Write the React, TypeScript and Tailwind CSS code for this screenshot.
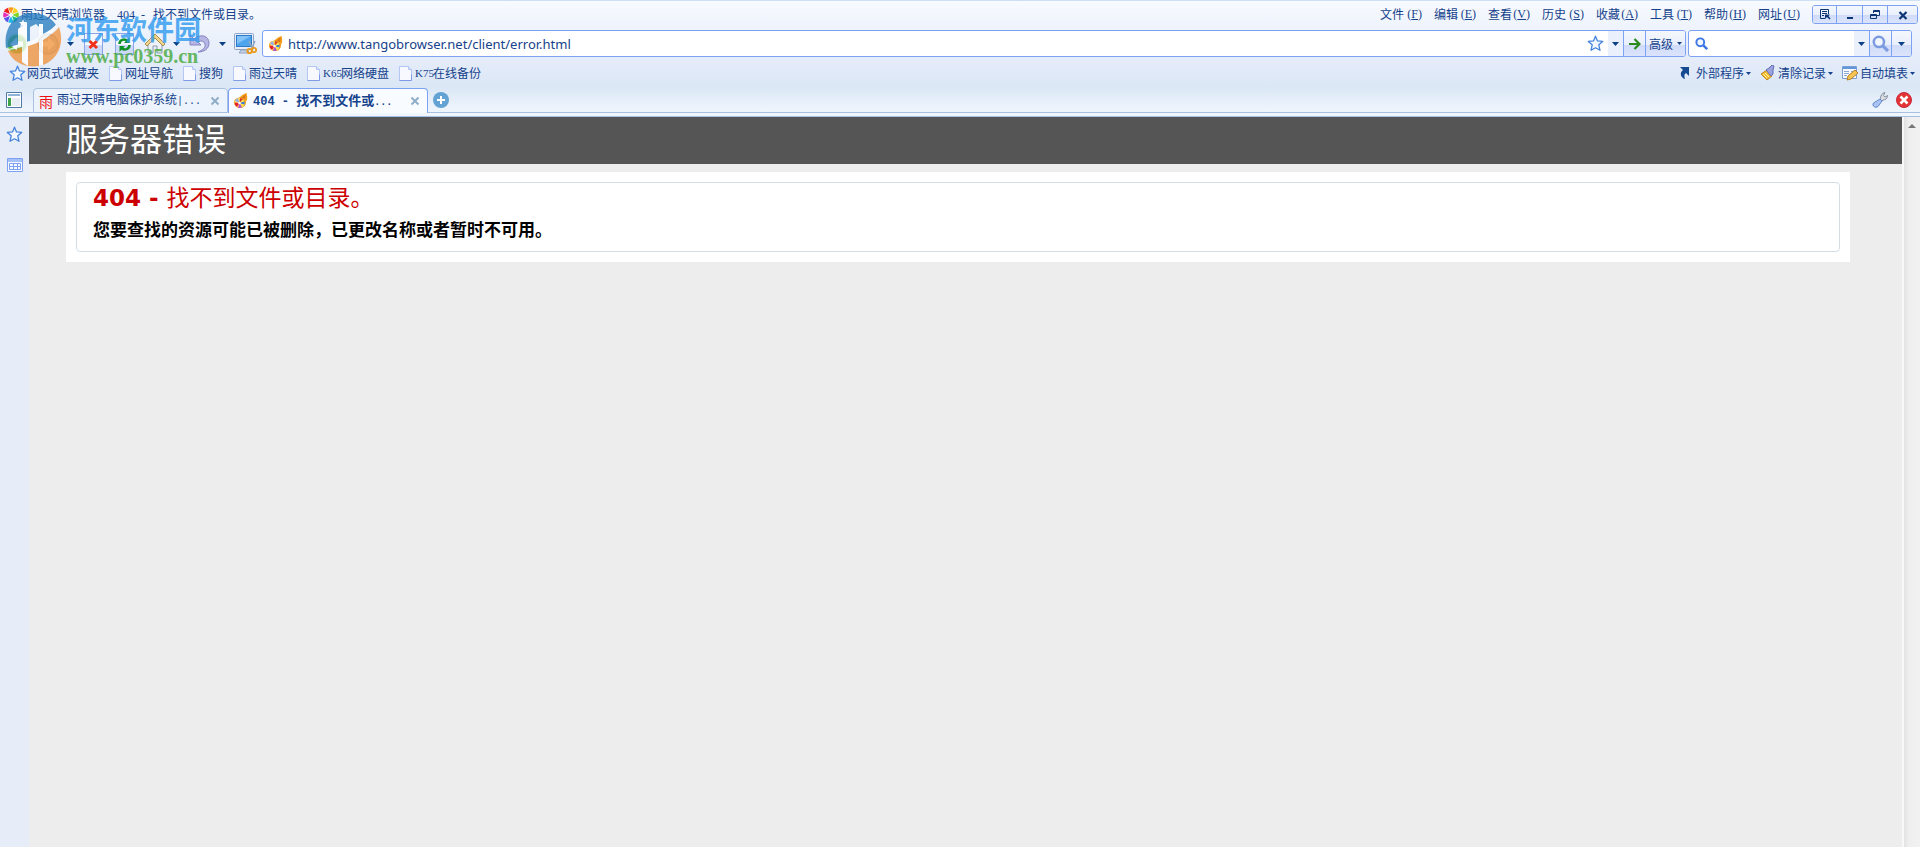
import type { ReactNode } from "react";

const glossy =
  "bg-[linear-gradient(to_bottom,#f4f7fd_0%,#e9effb_55%,#d0dbf8_55%,#dbe4fb_100%)]";

function Ascii({ children }: { children: ReactNode }) {
  return <span className="whitespace-pre font-['Liberation_Serif',serif] text-[12px]">{children}</span>;
}

function Caret({ small = false }: { small?: boolean }) {
  return small ? (
    <svg width="5" height="3" viewBox="0 0 5 3" className="shrink-0" aria-hidden="true">
      <path d="M0 0h5L2.5 3z" fill="#15428b" />
    </svg>
  ) : (
    <svg width="7" height="4" viewBox="0 0 7 4" className="shrink-0" aria-hidden="true">
      <path d="M0 0h7L3.5 4z" fill="#0b3f86" />
    </svg>
  );
}

function AppLogo() {
  const colors = ["#ff9a1f", "#ffd21f", "#7fd321", "#19c37d", "#1fb5e8", "#5a55e8", "#e92fb8", "#f01f1f"];
  return (
    <svg width="16" height="16" viewBox="-8 -8 16 16" className="shrink-0" aria-hidden="true">
      {colors.map((c, i) => (
        <path key={c} d="M0-1.5L-2.8-7.3A7.8 7.8 0 0 1 2.8-7.3z" fill={c} transform={`rotate(${i * 45})`} />
      ))}
    </svg>
  );
}

function FlameIcon() {
  return (
    <svg width="16" height="16" viewBox="0 0 16 16" className="shrink-0" aria-hidden="true">
      <path d="M5 5C8 4 9 1 14 0c-1 2 1 3 0 5 1 1-1 3-1 4 0 4-3 6-6 6-4 0-6-3-6-6 0-2 2-4 4-4z" fill="#f6a01c" />
      <path d="M8 5c2-1 3-3 5-4-1 2 0 3-1 5z" fill="#d9781a" />
      <circle cx="6.5" cy="10" r="5" fill="#ffe54a" />
      <path d="M6.500 10L2 8a5 5 0 0 1 3-3z" fill="#9bb0e8" />
      <path d="M6.500 10L1.500 9.500A5 5 0 0 0 4 14z" fill="#e41f3a" />
      <path d="M6.500 10L5 14.800a5 5 0 0 0 4-.600z" fill="#b14fd6" />
      <path d="M6.500 10l4.800 1.500a5 5 0 0 0 .200-3z" fill="#2f7be0" />
      <path d="M6.500 10L7 5l3 1z" fill="#d8372a" />
      <circle cx="6.500" cy="10" r="1.300" fill="#fff" />
    </svg>
  );
}

function StarIcon() {
  return (
    <svg width="17" height="17" viewBox="0 0 17 17" className="shrink-0" aria-hidden="true">
      <path
        d="M8.500 1.200l2 4.700 5.200.500-3.900 3.400 1.200 5.500-4.500-2.500L4 15.300l1.200-5.500L1.300 6.400l5.200-.500z"
        fill="#f3f8ff" stroke="#4583dd" strokeWidth="1.300" strokeLinejoin="round"
      />
    </svg>
  );
}

function PageIcon() {
  return (
    <svg width="13" height="15" viewBox="0 0 13 15" className="shrink-0" aria-hidden="true">
      <path d="M.5.5h9l3 3v11H.5z" fill="#f7f9ff" stroke="#b3c5f2" />
      <path d="M.5 14.500h12v-6" fill="none" stroke="#7f9be8" />
      <path d="M9.500.5v3h3" fill="#dbe5fb" stroke="#b3c5f2" />
    </svg>
  );
}

function CloseX() {
  return (
    <svg width="10" height="10" viewBox="0 0 10 10" aria-hidden="true">
      <path d="M1.500 1.500l7 7M8.500 1.500l-7 7" stroke="#8fadc6" strokeWidth="2" />
    </svg>
  );
}

function SheetFrame({ children }: { children: ReactNode }) {
  return (
    <svg width="19" height="22" viewBox="0 0 19 22" aria-hidden="true">
      <rect x=".5" y=".5" width="18" height="21" fill="#f4f7ff" stroke="#8ba6e6" />
      <path d="M1 12h17v9H1z" fill="#ccd9fa" />
      {children}
    </svg>
  );
}

const menus = [
  ["文件", "F"], ["编辑", "E"], ["查看", "V"], ["历史", "S"],
  ["收藏", "A"], ["工具", "T"], ["帮助", "H"], ["网址", "U"],
];

function TitleBar() {
  return (
    <header className="flex h-[28px] items-start">
      <h1 className="flex flex-1 items-center gap-[2px] pl-[3px] pt-1 leading-[18px]">
        <AppLogo />
        <span className="flex whitespace-nowrap">
          雨过天晴浏览器
          <span className="ml-3 w-[36px]"><Ascii>{"404  - "}</Ascii></span>
          找不到文件或目录。
        </span>
      </h1>
      <nav className="mr-3 flex gap-3 pt-1 leading-[18px]">
        {menus.map(([label, key]) => (
          <button key={key} type="button" className="flex w-[42px] justify-between whitespace-nowrap">
            <span>{label}</span>
            <Ascii>(<span className="underline underline-offset-1">{key}</span>)</Ascii>
          </button>
        ))}
      </nav>
      <div className="mr-[2px] mt-1 flex h-[19px] divide-x divide-[#7ea2f3] overflow-hidden rounded-[3px] border border-[#7ea2f3]">
        <button type="button" aria-label="工具栏" className={`grid w-[24px] place-items-center ${glossy}`}>
          <svg width="12" height="12" viewBox="0 0 12 12" fill="none" stroke="#0c3576" aria-hidden="true">
            <path d="M9.500 5V.5h-8v9H6M3 2.500h5M3 4.500h5M3 6.500h2" />
            <path d="M6 5.500h5l-1.500 1.500 2 2.500-1 1-2.500-2.500L6 10z" fill="#0c3576" stroke="none" />
          </svg>
        </button>
        <button type="button" aria-label="最小化" className={`grid w-[26px] place-items-center ${glossy}`}>
          <svg width="8" height="10" viewBox="0 0 8 10" aria-hidden="true"><path d="M1 7h6v2H1z" fill="#0c3576" /></svg>
        </button>
        <button type="button" aria-label="还原" className={`grid w-[25px] place-items-center ${glossy}`}>
          <svg width="10" height="10" viewBox="0 0 10 10" fill="none" stroke="#0c3576" aria-hidden="true">
            <path d="M3.500 3V.5h6v5H7M3 1.500h7M.5 4.500h6v4h-6zM0 5.500h7" />
          </svg>
        </button>
        <button type="button" aria-label="关闭" className={`grid w-[29px] place-items-center ${glossy}`}>
          <svg width="10" height="10" viewBox="0 0 10 10" aria-hidden="true">
            <path d="M1.500 2l7 7M8.500 2l-7 7" stroke="#0c3576" strokeWidth="2.200" />
          </svg>
        </button>
      </div>
    </header>
  );
}

function NavButtons() {
  return (
    <div className="flex w-[262px] shrink-0 items-center pl-[6px]">
      <button type="button" aria-label="后退">
        <svg width="22" height="22" viewBox="0 0 22 22" aria-hidden="true">
          <circle cx="11" cy="11" r="10" fill="#5fb83c" stroke="#c6e6bb" strokeWidth="1.500" />
          <path d="M11 4l-7 7 7 7v-4.500h6v-5h-6z" fill="#fff" />
        </svg>
      </button>
      <button type="button" aria-label="前进" className="ml-[9px]">
        <svg width="22" height="22" viewBox="0 0 22 22" aria-hidden="true">
          <circle cx="11" cy="11" r="10" fill="#d0d3d8" stroke="#b6bac2" strokeWidth="1.500" />
          <path d="M11 4l7 7-7 7v-4.500H5v-5h6z" fill="#fff" />
        </svg>
      </button>
      <button type="button" aria-label="浏览记录" className="ml-2"><Caret /></button>
      <button type="button" aria-label="停止" className="ml-[10px]">
        <SheetFrame><path d="M5.500 8l7.500 7M13 8l-7.500 7" stroke="#f03018" strokeWidth="3" /></SheetFrame>
      </button>
      <button type="button" aria-label="刷新" className="ml-3">
        <SheetFrame>
          <path d="M4.500 11c0-4 5-6 8-3M14.500 12c0 4-5 6-8 3" fill="none" stroke="#109326" strokeWidth="2.600" />
          <path d="M14.500 4v6H9zM4.500 19v-6H10z" fill="#109326" />
        </SheetFrame>
      </button>
      <button type="button" aria-label="主页" className="ml-[10px]">
        <svg width="22" height="22" viewBox="0 0 22 22" aria-hidden="true">
          <path d="M4 10v10h5v-7h4v7h5V10l-7-7z" fill="#eef1f7" stroke="#8d99ae" />
          <path d="M1 11L11 1l10 10-2 2-8-8-8 8z" fill="#f0d489" stroke="#a98f4d" />
        </svg>
      </button>
      <button type="button" aria-label="主页选项" className="ml-[7px]"><Caret /></button>
      <button type="button" aria-label="撤销" className="ml-[9px]">
        <svg width="22" height="22" viewBox="0 0 22 22" aria-hidden="true">
          <path d="M5 6c7-6 15-3 15 4 0 6-5 9-11 9 5-2 8-5 7-8-1-3-4-4-7-2l3 3H1V2z" fill="#b7b5e4" stroke="#8583bf" strokeLinejoin="round" />
        </svg>
      </button>
      <button type="button" aria-label="撤销选项" className="ml-2"><Caret /></button>
      <button type="button" aria-label="截图" className="ml-2">
        <svg width="23" height="22" viewBox="0 0 23 22" aria-hidden="true">
          <rect x=".5" y=".5" width="19" height="16" rx="1" fill="#e7edf7" stroke="#8ea5c9" />
          <rect x="2.500" y="2.500" width="15" height="11" fill="#4fa4ee" stroke="#2d78c7" />
          <path d="M3 3h14L3 11z" fill="#84c3f8" />
          <path d="M7 17h7l1 3H5z" fill="#c5d0e2" stroke="#92a4c2" />
          <path d="M15 8l3.500 8M21 8l-3.500 8" stroke="#93a5bd" strokeWidth="1.500" />
          <circle cx="15.500" cy="18" r="2.200" fill="none" stroke="#ec9a1a" strokeWidth="1.800" />
          <circle cx="20" cy="17" r="2.200" fill="none" stroke="#ec9a1a" strokeWidth="1.800" />
        </svg>
      </button>
    </div>
  );
}

function Magnifier({ size, color }: { size: number; color: string }) {
  return (
    <svg width={size} height={size} viewBox="0 0 16 16" className="shrink-0" aria-hidden="true">
      <circle cx="6.500" cy="6.500" r="4.800" fill="#f1f6ff" stroke={color} strokeWidth="2.400" />
      <path d="M10 10l5 5" stroke={color} strokeWidth="3" />
    </svg>
  );
}

function AddressRow() {
  return (
    <div className="mt-[1px] flex h-[27px] items-stretch pr-2">
      <NavButtons />
      <div className="flex min-w-0 flex-1 overflow-hidden rounded-[3px] border border-[#7ea2f3] bg-white">
        <div className="flex min-w-0 flex-1 items-center pl-[5px] pr-1">
          <FlameIcon />
          <input
            type="text"
            aria-label="地址"
            defaultValue="http://www.tangobrowser.net/client/error.html"
            className="ml-1 min-w-0 flex-1 bg-transparent font-['Noto_Sans',sans-serif] text-[13px] text-[#15428b] outline-none"
          />
          <button type="button" aria-label="收藏"><StarIcon /></button>
        </div>
        <button type="button" aria-label="地址列表" className="grid w-[15px] place-items-center bg-[#eaf1fc]"><Caret /></button>
        <button type="button" aria-label="转到" className={`grid w-[22px] place-items-center border-l border-[#7ea2f3] ${glossy}`}>
          <svg width="12" height="12" viewBox="0 0 12 12" fill="none" stroke="#2b8a1e" strokeWidth="2.200" aria-hidden="true">
            <path d="M0 6h10M5.500 1l5 5-5 5" />
          </svg>
        </button>
        <button type="button" className={`flex w-[40px] items-center gap-1 border-l border-[#7ea2f3] pl-[3px] ${glossy}`}>
          高级<Caret small />
        </button>
      </div>
      <div className="ml-[2px] flex w-[224px] overflow-hidden rounded-[3px] border border-[#7ea2f3] bg-white">
        <label className="flex min-w-0 flex-1 items-center pl-[6px]">
          <Magnifier size={13} color="#3f78e4" />
          <input type="text" aria-label="搜索" className="min-w-0 flex-1 bg-transparent pl-1 outline-none" />
        </label>
        <button type="button" aria-label="搜索引擎" className="grid w-[15px] place-items-center bg-[#eaf1fc]"><Caret /></button>
        <button type="button" aria-label="开始搜索" className={`grid w-[22px] place-items-center border-l border-[#7ea2f3] ${glossy}`}>
          <Magnifier size={17} color="#7d9be0" />
        </button>
        <button type="button" aria-label="搜索选项" className={`grid w-[20px] place-items-center border-l border-[#7ea2f3] ${glossy}`}><Caret /></button>
      </div>
    </div>
  );
}

function BookmarksBar() {
  const links = [
    { code: "", label: "网址导航" },
    { code: "", label: "搜狗" },
    { code: "", label: "雨过天晴" },
    { code: "K65", label: "网络硬盘" },
    { code: "K75", label: "在线备份" },
  ];
  return (
    <div className="mt-[2px] flex h-[28px] items-center whitespace-nowrap pl-[9px] pr-[5px]">
      <div className="flex flex-1 items-center gap-[10px]">
        <a href="#favorites" className="flex items-center gap-[1px]"><StarIcon />网页式收藏夹</a>
        {links.map(({ code, label }) => (
          <a key={label} href="#bookmark" className="flex items-center gap-[3px]">
            <PageIcon />
            <span className="flex">
              {code && <span className="w-[18px] font-['Liberation_Serif',serif] text-[11px]">{code}</span>}
              {label}
            </span>
          </a>
        ))}
      </div>
      <div className="flex items-center gap-[9px]">
        <button type="button" className="flex items-center gap-[2px]">
          <svg width="16" height="16" viewBox="0 0 16 16" aria-hidden="true">
            <path d="M2 2h9v9l-3-3c-2 1-2 3-1 6-4-1-6-6-2-9z" fill="#154a90" />
          </svg>
          外部程序<Caret small />
        </button>
        <button type="button" className="flex items-center gap-[2px]">
          <svg width="16" height="16" viewBox="0 0 16 16" aria-hidden="true">
            <path d="M1 9l6-4 5 6-5 4z" fill="#f5bd2c" stroke="#bf8520" />
            <path d="M3 9l4 4M5 8l4 4" stroke="#fff0a8" />
            <path d="M6 5l3-2 3-3 2 1-1 4v4l-2 2z" fill="#9ba2dd" stroke="#656db5" />
          </svg>
          清除记录<Caret small />
        </button>
        <button type="button" className="flex items-center gap-[2px]">
          <svg width="16" height="16" viewBox="0 0 16 16" aria-hidden="true">
            <path d="M.5 1.500h14v12H.5z" fill="#f8faff" stroke="#7b9fd4" />
            <path d="M1 2h13v2H1z" fill="#6297dc" />
            <path d="M2 6.500h5M2 8.500h5M2 10.500h3M9 6.500h4" stroke="#8aa9d8" />
            <path d="M5 15l1-4 7-6 3 3-7 6z" fill="#f6c552" stroke="#b67f28" />
          </svg>
          自动填表<Caret small />
        </button>
      </div>
    </div>
  );
}

function TabBar() {
  return (
    <div className="mt-[1px] flex h-[25px]">
      <div className="flex w-[33px] items-center border-b border-[#a9c0e0] pl-[6px]">
        <button type="button" aria-label="侧边栏">
          <svg width="16" height="16" viewBox="0 0 16 16" aria-hidden="true">
            <path d="M.5.5h15v15H.5z" fill="#fff" stroke="#4d7aa8" />
            <path d="M2 2h12v2H2z" fill="#8fb4da" />
            <path d="M2 6h3v8H2z" fill="#3fa34a" />
            <path d="M6 6h8v8H6z" fill="#e8edf4" />
          </svg>
        </button>
      </div>
      <div className="flex w-[195px] items-center rounded-t-[4px] border-x border-b border-t border-[#a9c0e0] bg-[#edf3fc] pl-[5px] pr-[7px]">
        <span className="w-[14px] text-[14px] text-[#ee1010]">雨</span>
        <button type="button" className="ml-1 flex-1 whitespace-nowrap text-left">
          雨过天晴电脑保护系统
          <span className="font-['Liberation_Mono',monospace] text-[10px]">|...</span>
        </button>
        <button type="button" aria-label="关闭标签"><CloseX /></button>
      </div>
      <div className="flex w-[200px] items-center rounded-t-[4px] border-x border-t border-[#7ea2f3] bg-[#f8fbff] pl-[4px] pr-[7px]">
        <FlameIcon />
        <button type="button" className="ml-1 flex-1 whitespace-nowrap text-left text-[13px] font-bold">
          <span className="whitespace-pre font-['Liberation_Mono',monospace] text-[12px]">{"404 - "}</span>找不到文件或
          <span className="font-['Liberation_Mono',monospace] text-[10px]">...</span>
        </button>
        <button type="button" aria-label="关闭标签"><CloseX /></button>
      </div>
      <div className="flex flex-1 items-center border-b border-[#a9c0e0] pl-[5px] pr-2">
        <button type="button" aria-label="新标签">
          <svg width="16" height="16" viewBox="0 0 16 16" aria-hidden="true">
            <circle cx="8" cy="8" r="8" fill="#62a3d4" />
            <path d="M8 4v8M4 8h8" stroke="#fff" strokeWidth="2" />
          </svg>
        </button>
        <button type="button" aria-label="设置" className="ml-auto">
          <svg width="16" height="16" viewBox="0 0 16 16" aria-hidden="true">
            <path d="M8.500 6.500C8.500 3.500 10 1 13 .5l-1.500 3 1.500 1.500 2.500-1.500c0 3-2 4.500-4.500 4.500l-1 1-2-2z" fill="#d9dde3" stroke="#858f9d" />
            <path d="M8 7l2 2-4 5.500C3.500 16.500-.5 14 1.500 11z" fill="#a9c4f2" stroke="#6286c7" />
          </svg>
        </button>
        <button type="button" aria-label="关闭所有标签" className="ml-2">
          <svg width="16" height="16" viewBox="0 0 16 16" aria-hidden="true">
            <circle cx="8" cy="8" r="7.500" fill="#e23434" stroke="#c92a3c" />
            <path d="M4.500 4.500l7 7M11.500 4.500l-7 7" stroke="#fff" strokeWidth="2.600" />
          </svg>
        </button>
      </div>
    </div>
  );
}

function Watermark() {
  return (
    <div className="pointer-events-none absolute left-[4px] top-[12px] flex gap-[4px]">
      <svg width="58" height="55" viewBox="0 0 58 55" className="opacity-75" aria-hidden="true">
        <path d="M2 36C-1 14 12 1 29 1c10 0 19 5 23 12-4 6-10 10-16 12v-9l-4-4-6 3v14L2 36z" fill="#1f78bd" />
        <path d="M4 39c5-1 10-2 15-4v15l5 3V34c4-1 8-3 11-4v24C22 56 9 51 4 39zM39 28c7-4 13-9 16-13 6 17-1 32-16 38z" fill="#ef8f35" />
        <path d="M14 17l9-7v20c4-1 8-3 12-5V12h4v10c6-3 10-6 14-10-3 8-8 12-14 16v25h-4V30l-11 4v20l-6-4V35c-6 2-11 3-16 3 5-2 9-3 12-5z" fill="#fff" />
        <path d="M19 7l1 3 3 0-2 2 1 3-3-2-3 2 1-3-2-2 3 0z" fill="#fff" />
      </svg>
      <div className="whitespace-nowrap font-bold opacity-80">
        <p className="text-[27px] leading-[34px] text-[#2f9af0]">河东软件园</p>
        <p className="font-['Liberation_Serif',serif] text-[20px] leading-[20px] text-[#46a93c]">www.pc0359.cn</p>
      </div>
    </div>
  );
}

export default function App() {
  return (
    <div className="relative flex min-h-screen flex-col bg-[#ededed] font-['Noto_Sans_CJK_SC',sans-serif] text-[12px] leading-[18px] text-[#15428b]">
      <div className="border-b border-t border-b-[#a4c0e6] border-t-[#cfe0f5] bg-[linear-gradient(to_bottom,#f7fafe_0px,#e5ecfa_58px,#dbe7f6_86px,#f1f6fd_112px)] pb-[3px]">
        <TitleBar />
        <AddressRow />
        <BookmarksBar />
        <TabBar />
      </div>
      <div className="flex flex-1">
        <aside className="flex w-[29px] flex-col items-center gap-[15px] bg-[#e6edf9] pt-[9px]">
          <button type="button" aria-label="收藏夹"><StarIcon /></button>
          <button type="button" aria-label="日历">
            <svg width="16" height="14" viewBox="0 0 16 14" aria-hidden="true">
              <path d="M.5.5h15v13H.5z" fill="#f7faff" stroke="#7ea2f3" />
              <path d="M1 1h14v3H1z" fill="#a6c0f8" />
              <path d="M2.500 5.500h11v6h-11zM2 8.500h12M6.500 5v7M10.500 5v7" fill="none" stroke="#7ea2f3" />
            </svg>
          </button>
        </aside>
        <main className="min-w-0 flex-1">
          <h1 className="bg-[#555555] pb-[6px] pl-[37px] text-[32px] leading-[41px] text-white">服务器错误</h1>
          <div className="ml-[37px] mr-[52px] mt-2 bg-white p-[10px]">
            <section className="rounded-[4px] border border-[#d3dde6] px-4 pb-1 text-black">
              <h2 className="font-['DejaVu_Sans','Noto_Sans_CJK_SC',sans-serif] text-[23px] font-bold leading-[26px] text-[#cc0000]">
                404 - <span className="font-['Noto_Sans_CJK_SC',sans-serif] font-normal">找不到文件或目录。</span>
              </h2>
              <h3 className="text-[17px] font-bold leading-[36px]">您要查找的资源可能已被删除，已更改名称或者暂时不可用。</h3>
            </section>
          </div>
        </main>
        <div className="flex w-[18px] justify-center border-l-2 border-[#f8f8f8] bg-[linear-gradient(to_right,#e2e2e2,#efefef_30%,#f1f1f1)] pt-[7px]">
          <svg width="8" height="4" viewBox="0 0 8 4" aria-hidden="true"><path d="M4 0l4 4H0z" fill="#777" /></svg>
        </div>
      </div>
      <Watermark />
    </div>
  );
}
